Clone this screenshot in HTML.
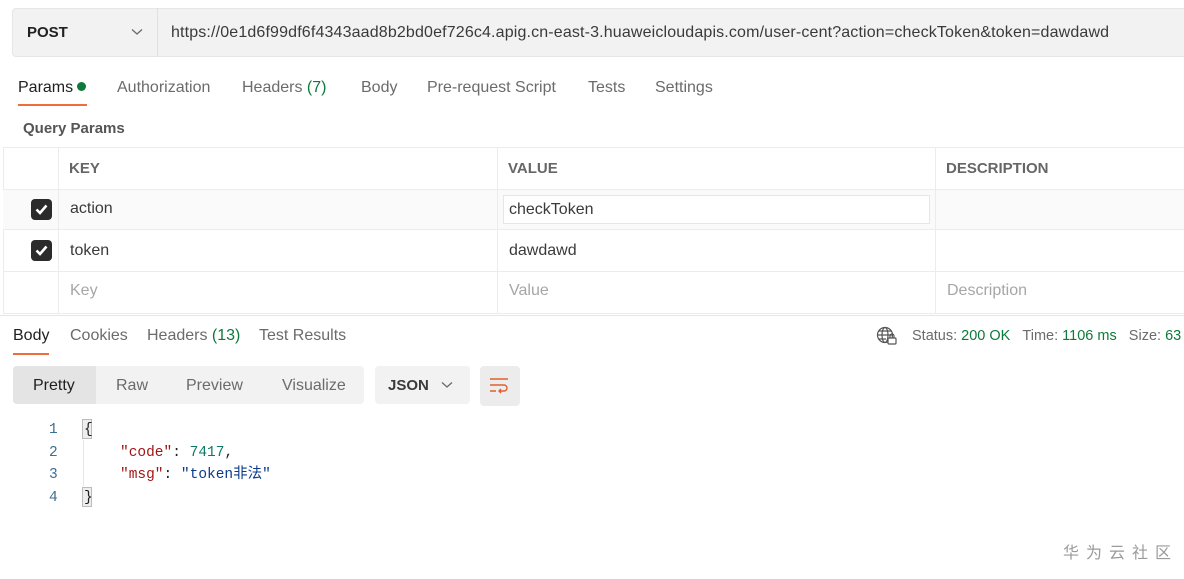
<!DOCTYPE html>
<html><head><meta charset="utf-8"><style>
*{margin:0;padding:0;box-sizing:border-box}
body{width:1184px;height:579px;overflow:hidden;background:#fff;font-family:"Liberation Sans","Noto Sans CJK SC",sans-serif;color:#212121;position:relative;font-size:16px;line-height:18px}
.a{position:absolute;white-space:nowrap}
.g{color:#0d7a3a}
.t{color:#6b6b6b}
</style></head><body>
<div class="a" style="left:12px;top:8px;width:1180px;height:49px;background:#f2f2f2;border:1px solid #e6e6e6;border-radius:4px"></div>
<div class="a" style="left:157px;top:8px;width:1px;height:49px;background:#e0e0e0"></div>
<div class="a" style="left:27px;top:24px;font-size:15px;font-weight:bold;color:#212121">POST</div>
<svg class="a" style="left:131px;top:28px" width="12" height="8"><path d="M1 1.5 L6 6 L11 1.5" stroke="#6b6b6b" fill="none" stroke-width="1.3"/></svg>
<div class="a" style="left:171px;top:24px;font-size:16px;letter-spacing:0.15px;color:#3a3a3a">https://0e1d6f99df6f4343aad8b2bd0ef726c4.apig.cn-east-3.huaweicloudapis.com/user-cent?action=checkToken&amp;token=dawdawd</div>

<div class="a" style="left:18px;top:79px;color:#212121">Params</div>
<div class="a" style="left:77px;top:82px;width:9px;height:9px;border-radius:50%;background:#0d7a3a"></div>
<div class="a" style="left:18px;top:104px;width:69px;height:2px;background:#f26b3a"></div>
<div class="a t" style="left:117px;top:79px">Authorization</div>
<div class="a t" style="left:242px;top:79px">Headers <span class="g">(7)</span></div>
<div class="a t" style="left:361px;top:79px">Body</div>
<div class="a t" style="left:427px;top:79px">Pre-request Script</div>
<div class="a t" style="left:588px;top:79px">Tests</div>
<div class="a t" style="left:655px;top:79px">Settings</div>
<div class="a" style="left:23px;top:120px;font-size:15px;font-weight:bold;color:#555">Query Params</div>

<div class="a" style="left:3px;top:147px;width:1190px;height:167px;border:1px solid #ececec"></div>
<div class="a" style="left:3px;top:189px;width:1190px;height:41px;background:#fafafa;border-top:1px solid #ececec;border-bottom:1px solid #ececec"></div>
<div class="a" style="left:3px;top:271px;width:1190px;height:1px;background:#ececec"></div>
<div class="a" style="left:58px;top:147px;width:1px;height:166px;background:#ececec"></div>
<div class="a" style="left:497px;top:147px;width:1px;height:166px;background:#ececec"></div>
<div class="a" style="left:935px;top:147px;width:1px;height:166px;background:#ececec"></div>
<div class="a t" style="left:69px;top:160px;font-size:15px;font-weight:bold;color:#666">KEY</div>
<div class="a t" style="left:508px;top:160px;font-size:15px;font-weight:bold;color:#666">VALUE</div>
<div class="a t" style="left:946px;top:160px;font-size:15px;font-weight:bold;color:#666">DESCRIPTION</div>
<div class="a" style="left:31px;top:199px;width:21px;height:21px;background:#2b2b2b;border-radius:4px"></div>
<svg class="a" style="left:31px;top:199px" width="21" height="21"><path d="M5.5 10.5 L9 14 L15.5 6.5" stroke="#fff" stroke-width="2.6" fill="none"/></svg>
<div class="a" style="left:31px;top:240px;width:21px;height:21px;background:#2b2b2b;border-radius:4px"></div>
<svg class="a" style="left:31px;top:240px" width="21" height="21"><path d="M5.5 10.5 L9 14 L15.5 6.5" stroke="#fff" stroke-width="2.6" fill="none"/></svg>
<div class="a" style="left:70px;top:200px;color:#3a3a3a">action</div>
<div class="a" style="left:503px;top:195px;width:427px;height:29px;background:#fff;border:1px solid #e6e6e6"></div>
<div class="a" style="left:509px;top:201px;color:#3a3a3a">checkToken</div>
<div class="a" style="left:70px;top:242px;color:#3a3a3a">token</div>
<div class="a" style="left:509px;top:242px;color:#3a3a3a">dawdawd</div>
<div class="a" style="left:70px;top:282px;color:#a6a6a6">Key</div>
<div class="a" style="left:509px;top:282px;color:#a6a6a6">Value</div>
<div class="a" style="left:947px;top:282px;color:#a6a6a6">Description</div>
<div class="a" style="left:0;top:315px;width:1184px;height:1px;background:#e6e6e6"></div>

<div class="a" style="left:13px;top:327px;color:#212121">Body</div>
<div class="a" style="left:13px;top:353px;width:36px;height:2px;background:#f26b3a"></div>
<div class="a t" style="left:70px;top:327px">Cookies</div>
<div class="a t" style="left:147px;top:327px">Headers <span class="g">(13)</span></div>
<div class="a t" style="left:259px;top:327px">Test Results</div>
<svg class="a" style="left:876px;top:326px" width="22" height="20" fill="none" stroke="#555" stroke-width="1.2"><circle cx="9" cy="9" r="7.5"/><ellipse cx="9" cy="9" rx="3" ry="7.5"/><path d="M1.5 9h15M3 5h12M3 13h7"/><rect x="12" y="12" width="8" height="6" fill="#fff" rx="1"/><path d="M14 12v-2a2 2 0 0 1 4 0v2"/></svg>
<div class="a t" style="left:912px;top:327px;font-size:14.5px">Status: <span class="g">200 OK</span>&nbsp;&nbsp;&nbsp;Time: <span class="g">1106 ms</span>&nbsp;&nbsp;&nbsp;Size: <span class="g">63</span></div>

<div class="a" style="left:13px;top:366px;width:351px;height:38px;background:#f2f2f2;border-radius:4px"></div>
<div class="a" style="left:13px;top:366px;width:83px;height:38px;background:#e4e4e4;border-radius:4px 0 0 4px"></div>
<div class="a" style="left:33px;top:377px;color:#212121">Pretty</div>
<div class="a t" style="left:116px;top:377px">Raw</div>
<div class="a t" style="left:186px;top:377px">Preview</div>
<div class="a t" style="left:282px;top:377px">Visualize</div>
<div class="a" style="left:375px;top:366px;width:95px;height:38px;background:#f2f2f2;border-radius:4px"></div>
<div class="a" style="left:388px;top:377px;font-size:15px;font-weight:bold;color:#3a3a3a">JSON</div>
<svg class="a" style="left:441px;top:381px" width="12" height="8"><path d="M1 1.5 L6 6 L11 1.5" stroke="#6b6b6b" fill="none" stroke-width="1.3"/></svg>
<div class="a" style="left:480px;top:366px;width:40px;height:40px;background:#ececec;border-radius:4px"></div>
<svg class="a" style="left:489px;top:376px" width="22" height="20" fill="none" stroke="#e0602c" stroke-width="1.4"><path d="M1 3h18M1 9h14a3 3 0 0 1 0 6h-5M12 13l-2 2 2 2M1 15h6"/></svg>

<div class="a" style="left:82px;top:419px;width:10px;height:20px;background:#eee;border:1px solid #bbb"></div>
<div class="a" style="left:82px;top:487px;width:10px;height:20px;background:#eee;border:1px solid #bbb"></div>
<div class="a" style="left:83px;top:440px;width:1px;height:46px;background:#e6e6e6"></div>
<div style="font-family:'Liberation Mono','Noto Sans CJK SC',monospace;font-size:14.5px;line-height:18px">
<div class="a" style="left:49px;top:421px;color:#3d6e8f">1</div>
<div class="a" style="left:49px;top:444px;color:#3d6e8f">2</div>
<div class="a" style="left:49px;top:466px;color:#3d6e8f">3</div>
<div class="a" style="left:49px;top:489px;color:#3d6e8f">4</div>
<div class="a" style="left:84px;top:421px">{</div>
<div class="a" style="left:120px;top:444px"><span style="color:#a31515">"code"</span>: <span style="color:#0b7a66">7417</span>,</div>
<div class="a" style="left:120px;top:466px"><span style="color:#a31515">"msg"</span>: <span style="color:#0b3c8c">"token非法"</span></div>
<div class="a" style="left:84px;top:489px">}</div>
</div>
<div class="a" style="left:1063px;top:545px;font-size:16px;color:#9a9a9a;letter-spacing:7px">华为云社区</div>
</body></html>
